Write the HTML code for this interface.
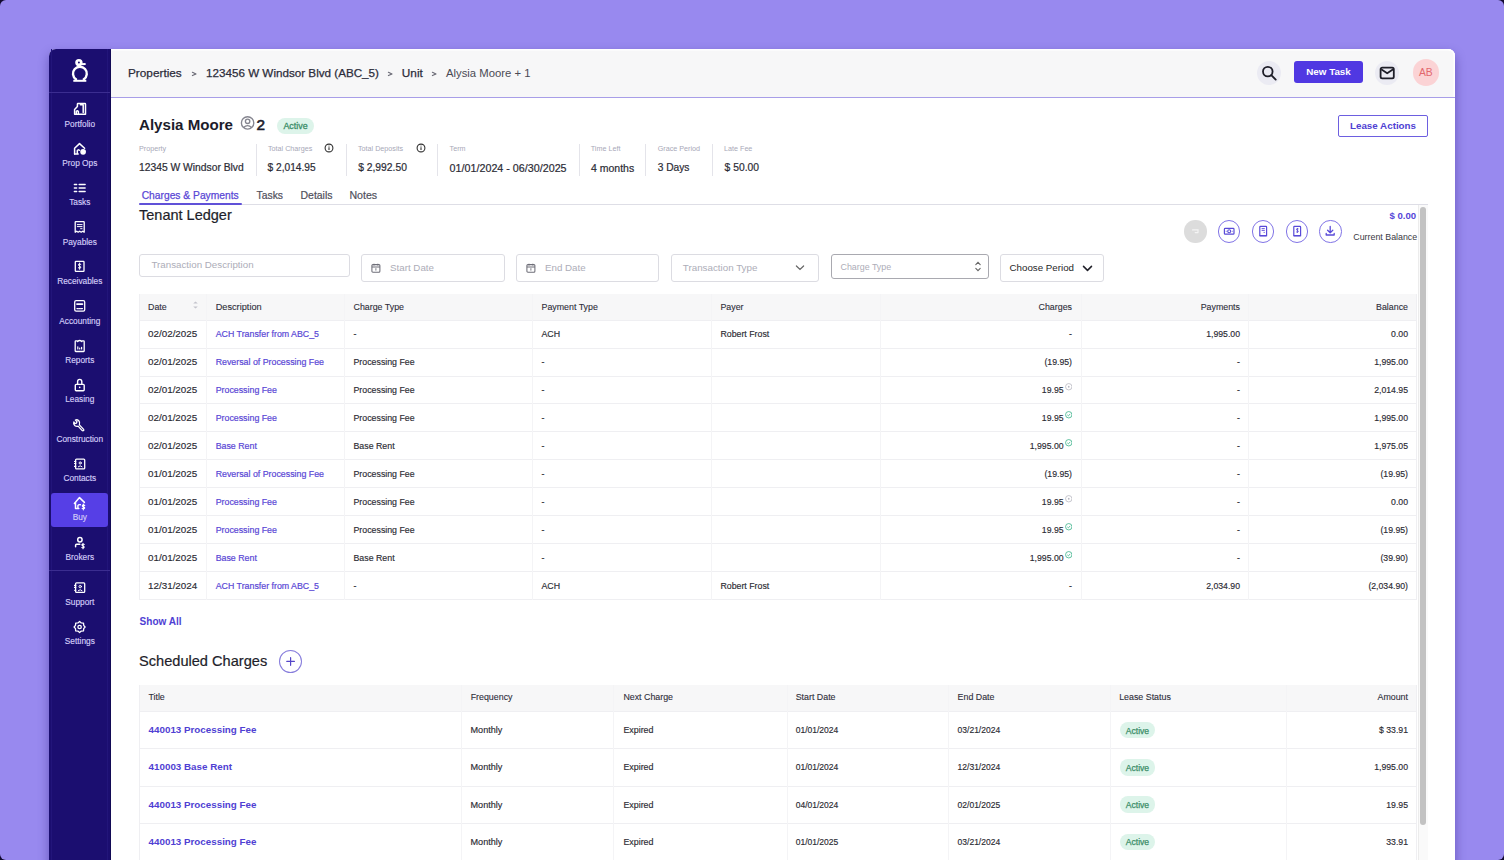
<!DOCTYPE html><html><head><meta charset="utf-8"><style>
*{box-sizing:border-box;margin:0;padding:0}
html,body{width:1504px;height:860px;overflow:hidden}
body{background:#120a30;font-family:"Liberation Sans",sans-serif;position:relative;color:#222}
.t{position:absolute;white-space:nowrap;line-height:20px}
.b{position:absolute}
.nav{position:absolute;left:49px;width:61px;text-align:center;color:#d2cbf6;font-size:8.3px;line-height:10px;white-space:nowrap}
.ico{position:absolute}
.lbl{position:absolute;white-space:nowrap;line-height:10px;font-size:7.2px;color:#a9a9b8}
.val{position:absolute;white-space:nowrap;line-height:16px;font-size:10.3px;color:#2a2a33}
.vd{position:absolute;width:1px;background:#e3e3e8;top:144px;height:32px}
.cell{position:absolute;white-space:nowrap;line-height:12px;font-size:8.8px;color:#2b2b30}
.hcell{position:absolute;white-space:nowrap;line-height:12px;font-size:8.4px;color:#2b2b38;font-weight:bold}
.lnk{color:#5b48d8}
.r{text-align:right}
.n{letter-spacing:0.5px}
</style></head><body>
<div class="b" style="left:0px;top:0px;width:1504px;height:860px;background:#9889ef;border-radius:6px"></div>
<div class="b" style="left:49px;top:49px;width:1406px;height:831px;background:#fff;border-radius:7px 7px 0 0;box-shadow:0 5px 11px rgba(30,15,110,0.4)"></div>
<div class="b" style="left:49px;top:49px;width:61.599999999999994px;height:831px;background:#1b0e70;border-radius:7px 0 0 0"></div>
<div class="b" style="left:51px;top:49px;width:1px;height:831px;background:#22157a"></div>
<div class="b" style="left:107px;top:49px;width:1px;height:831px;background:#22157a"></div>
<div class="b" style="left:109.6px;top:49px;width:1.0px;height:831px;background:#120a55"></div>
<div class="b" style="left:49px;top:92px;width:61px;height:1px;background:#3b2d90"></div>
<div class="b" style="left:49px;top:570px;width:61px;height:1px;background:#3b2d90"></div>
<div class="b" style="left:110.6px;top:49px;width:1344.4px;height:49px;background:#f7f7f8;border-bottom:1px solid #a89ee8;border-radius:0 7px 0 0;box-shadow:inset 0 1.5px 0 #fff, inset -1.5px 0 0 #fff"></div>
<div class="b" style="left:51px;top:493px;width:57px;height:33.5px;background:#563fe6;border-radius:3px"></div>
<div class="t" style="left:49px;top:118.5px;line-height:10px;font-size:8.3px;color:#d4cdf8;width:61.6px;text-align:center;-webkit-text-stroke:0.15px #d4cdf8;">Portfolio</div>
<div class="t" style="left:49px;top:158.0px;line-height:10px;font-size:8.3px;color:#d4cdf8;width:61.6px;text-align:center;-webkit-text-stroke:0.15px #d4cdf8;">Prop Ops</div>
<div class="t" style="left:49px;top:197.0px;line-height:10px;font-size:8.3px;color:#d4cdf8;width:61.6px;text-align:center;-webkit-text-stroke:0.15px #d4cdf8;">Tasks</div>
<div class="t" style="left:49px;top:236.6px;line-height:10px;font-size:8.3px;color:#d4cdf8;width:61.6px;text-align:center;-webkit-text-stroke:0.15px #d4cdf8;">Payables</div>
<div class="t" style="left:49px;top:276.0px;line-height:10px;font-size:8.3px;color:#d4cdf8;width:61.6px;text-align:center;-webkit-text-stroke:0.15px #d4cdf8;">Receivables</div>
<div class="t" style="left:49px;top:315.5px;line-height:10px;font-size:8.3px;color:#d4cdf8;width:61.6px;text-align:center;-webkit-text-stroke:0.15px #d4cdf8;">Accounting</div>
<div class="t" style="left:49px;top:354.9px;line-height:10px;font-size:8.3px;color:#d4cdf8;width:61.6px;text-align:center;-webkit-text-stroke:0.15px #d4cdf8;">Reports</div>
<div class="t" style="left:49px;top:394.3px;line-height:10px;font-size:8.3px;color:#d4cdf8;width:61.6px;text-align:center;-webkit-text-stroke:0.15px #d4cdf8;">Leasing</div>
<div class="t" style="left:49px;top:433.7px;line-height:10px;font-size:8.3px;color:#d4cdf8;width:61.6px;text-align:center;-webkit-text-stroke:0.15px #d4cdf8;">Construction</div>
<div class="t" style="left:49px;top:473.1px;line-height:10px;font-size:8.3px;color:#d4cdf8;width:61.6px;text-align:center;-webkit-text-stroke:0.15px #d4cdf8;">Contacts</div>
<div class="t" style="left:49px;top:512.3px;line-height:10px;font-size:8.3px;color:#d4cdf8;width:61.6px;text-align:center;-webkit-text-stroke:0.15px #d4cdf8;">Buy</div>
<div class="t" style="left:49px;top:551.9px;line-height:10px;font-size:8.3px;color:#d4cdf8;width:61.6px;text-align:center;-webkit-text-stroke:0.15px #d4cdf8;">Brokers</div>
<div class="t" style="left:49px;top:597.0px;line-height:10px;font-size:8.3px;color:#d4cdf8;width:61.6px;text-align:center;-webkit-text-stroke:0.15px #d4cdf8;">Support</div>
<div class="t" style="left:49px;top:636.2px;line-height:10px;font-size:8.3px;color:#d4cdf8;width:61.6px;text-align:center;-webkit-text-stroke:0.15px #d4cdf8;">Settings</div>
<svg class="ico" style="left:0;top:0" width="120" height="860" viewBox="0 0 120 860"><g stroke="#fff" fill="none" stroke-width="1.8" stroke-linecap="butt"><circle cx="78.9" cy="62.6" r="2.35" stroke-width="2.7"/><path d="M80.4 64.3 L85.6 63.9" stroke-width="2"/><path d="M75.9 80.6 V79.2 A6.9 6.9 0 1 1 83.9 79.2 V80.6" stroke-width="2.4"/><path d="M73.3 80.8 H86.3" stroke-width="2"/></g><g stroke="#fff" fill="none" stroke-linecap="round" stroke-linejoin="round" stroke-width="1.5"><path d="M74.6 114.3 V109.6 L77.4 106.6 V104.2 Q77.4 103.6 78 103.6 H84.9 Q85.5 103.6 85.5 104.2 V114.3 Z"/><path d="M76.3 114.3 V111.6 Q77.3 109.8 78.4 111.6 V114.3"/><path d="M80.4 104.8 H83.2 V112.6"/></g><g stroke="#fff" fill="none" stroke-linecap="round" stroke-linejoin="round" stroke-width="1.5"><path d="M74.6 153.9 V148.3 L79.5 143.6 L84.6 148.2"/><path d="M74.6 153.9 H78.2"/><path d="M77.3 153.4 V150.6 Q78.2 149.3 79.3 150.3"/><circle cx="83.1" cy="151.8" r="2.1" fill="#fff"/></g><g stroke="#fff" fill="none" stroke-linecap="round" stroke-linejoin="round" stroke-width="1.5"><path d="M74.4 184.5 H76.6 M79.2 184.5 H85.1 M74.4 188.1 H76.6 M79.2 188.1 H85.1 M74.4 191.6 H76.6 M79.2 191.6 H85.1"/></g><g stroke="#fff" fill="none" stroke-linecap="round" stroke-linejoin="round" stroke-width="1.5"><path d="M75.2 232.2 V222.2 Q75.2 221.6 75.8 221.6 H83.6 Q84.2 221.6 84.2 222.2 V232.2 L82.7 231.2 L81.2 232.2 L79.7 231.2 L78.2 232.2 L76.7 231.2 Z" stroke-width="1.3"/><path d="M77.3 224.6 H82.1 M77.3 226.6 H82.1 M80.6 228.7 H82.1" stroke-width="1"/></g><g stroke="#fff" fill="none" stroke-linecap="round" stroke-linejoin="round" stroke-width="1.5"><rect x="75.3" y="261.4" width="8.7" height="10" rx="0.6" stroke-width="1.3"/><path d="M80.9 264.4 Q79.6 263.4 78.5 264.3 Q77.9 265.4 79.6 266.1 Q81.3 266.7 80.7 267.9 Q79.6 268.8 78.3 267.8 M79.6 263 V269.3" stroke-width="1"/></g><g stroke="#fff" fill="none" stroke-linecap="round" stroke-linejoin="round" stroke-width="1.5"><rect x="74.7" y="300.7" width="10" height="10.5" rx="1.4" stroke-width="1.3"/><path d="M77 304.1 H82.4" stroke-width="1.8"/><path d="M77 308.6 H82.4" stroke-width="1.4" stroke-dasharray="1.2 0.9"/></g><g stroke="#fff" fill="none" stroke-linecap="round" stroke-linejoin="round" stroke-width="1.5"><path d="M77.3 340.8 H75.8 Q75.2 340.8 75.2 341.4 V351 Q75.2 351.5 75.8 351.5 H83.6 Q84.2 351.5 84.2 351 V341.4 Q84.2 340.8 83.6 340.8 H82.1" stroke-width="1.3"/><path d="M77.6 341.6 Q79.7 339.6 81.8 341.6" stroke-width="1.4"/><path d="M77.8 349 V346.8 M79.7 349 V348 M81.6 349 V347.4" stroke-width="1.2"/></g><g stroke="#fff" fill="none" stroke-linecap="round" stroke-linejoin="round" stroke-width="1.5"><path d="M77.6 384.2 V381.6 Q77.6 379.4 79.7 379.4 Q81.8 379.4 81.8 381.6 V384.2" stroke-width="1.4"/><rect x="75.3" y="384.4" width="8.9" height="6.3" rx="0.9" stroke-width="1.4"/><circle cx="79.7" cy="387.4" r="0.8" fill="#fff" stroke="none"/></g><g stroke="#fff" fill="none" stroke-linecap="round" stroke-linejoin="round" stroke-width="1.5"><path d="M83.6 429.4 L79.4 424.9 Q80.3 422.2 78.6 420.5 Q77 419.3 75.4 420.1 L77 421.8 L76.4 423.2 L75 423.6 L73.8 422 Q73.2 424 74.6 425.4 Q76.4 426.8 78.1 426.1 L82.2 430.6 Q82.9 431.2 83.6 430.6 Q84.2 430 83.6 429.4 Z" stroke-width="1.3"/></g><g stroke="#fff" fill="none" stroke-linecap="round" stroke-linejoin="round" stroke-width="1.5"><rect x="75.6" y="459.2" width="9.1" height="9.7" rx="0.9" stroke-width="1.3"/><path d="M74.5 461.5 H75.8 M74.5 463.5 H75.8 M74.5 466.4 H75.8" stroke-width="1.1"/><circle cx="80.2" cy="463" r="1.1" stroke-width="1"/><path d="M78.3 466.7 Q80.2 464.7 82.1 466.7" stroke-width="1"/></g><g stroke="#fff" fill="none" stroke-linecap="round" stroke-linejoin="round" stroke-width="1.5"><path d="M74.4 503.4 L79.5 497.6 L84.4 502.4" stroke-width="1.5"/><path d="M75.5 502.8 V508.6 H78.8" stroke-width="1.5"/><path d="M77.9 508.4 V505.6 Q78.4 504.5 80.4 504.7" stroke-width="1.4"/><path d="M84.7 505.4 Q83.5 504.6 82.5 505.3 Q82 506.4 83.4 506.8 Q84.9 507.2 84.5 508.4 Q83.5 509.3 82.2 508.5 M83.4 504 V509.8" stroke-width="1.2"/></g><g stroke="#fff" fill="none" stroke-linecap="round" stroke-linejoin="round" stroke-width="1.5"><circle cx="79.9" cy="539.7" r="2.2" stroke-width="1.5"/><path d="M75.6 546.8 V545.2 Q75.6 544.2 76.6 544.2 H79.8" stroke-width="1.5"/><path d="M84.2 544.4 Q83 543.6 82 544.4 Q81.6 545.5 82.9 545.9 Q84.4 546.3 84 547.5 Q82.9 548.3 81.8 547.6 M83 543.4 V548.8" stroke-width="1.1"/></g><g stroke="#fff" fill="none" stroke-linecap="round" stroke-linejoin="round" stroke-width="1.5"><rect x="75.6" y="582.9" width="9.1" height="9.5" rx="0.9" stroke-width="1.3"/><path d="M74.5 585.4 H75.8 M74.5 587.4 H75.8 M74.5 590.2 H75.8" stroke-width="1.1"/><circle cx="80.2" cy="586.6" r="1.2" stroke-width="1"/><path d="M78.3 590.6 Q80.2 588.6 82.1 590.6" stroke-width="1"/></g><g stroke="#fff" fill="none" stroke-linecap="round" stroke-linejoin="round" stroke-width="1.5"><path d="M79.6 621.5 L81.3 622.9 L83.5 623.1 L83.7 625.3 L85.1 627 L83.7 628.7 L83.5 630.9 L81.3 631.1 L79.6 632.5 L77.9 631.1 L75.7 630.9 L75.5 628.7 L74.1 627 L75.5 625.3 L75.7 623.1 L77.9 622.9 Z" stroke-width="1.3"/><circle cx="79.6" cy="627" r="1.7" stroke-width="1.3"/></g></svg>
<div class="t" style="left:128px;top:62.7px;line-height:20px;font-size:11.8px;color:#2c2c3a;-webkit-text-stroke:0.25px #2c2c3a;">Properties</div>
<svg class="ico" style="left:190.9px;top:69.5px" width="7" height="8" viewBox="0 0 7 8"><path d="M1.4 2.2 L5 3.9 L1.4 5.6" stroke="#6b6b76" stroke-width="1.1" fill="none" stroke-linecap="round" stroke-linejoin="round"/></svg>
<div class="t" style="left:206px;top:62.7px;line-height:20px;font-size:11.66px;color:#2c2c3a;-webkit-text-stroke:0.25px #2c2c3a;">123456 W Windsor Blvd (ABC_5)</div>
<svg class="ico" style="left:386.5px;top:69.5px" width="7" height="8" viewBox="0 0 7 8"><path d="M1.4 2.2 L5 3.9 L1.4 5.6" stroke="#6b6b76" stroke-width="1.1" fill="none" stroke-linecap="round" stroke-linejoin="round"/></svg>
<div class="t" style="left:401.8px;top:62.7px;line-height:20px;font-size:11.8px;color:#2c2c3a;-webkit-text-stroke:0.25px #2c2c3a;">Unit</div>
<svg class="ico" style="left:431.1px;top:69.5px" width="7" height="8" viewBox="0 0 7 8"><path d="M1.4 2.2 L5 3.9 L1.4 5.6" stroke="#6b6b76" stroke-width="1.1" fill="none" stroke-linecap="round" stroke-linejoin="round"/></svg>
<div class="t" style="left:446px;top:62.7px;line-height:20px;font-size:11.3px;color:#4a4a55;">Alysia Moore + 1</div>
<div class="b" style="left:1257px;top:60.5px;width:24px;height:24.0px;background:#ebebf3;border-radius:50%"></div>
<svg class="ico" style="left:1257px;top:60.5px" width="24" height="24" viewBox="0 0 24 24"><circle cx="10.8" cy="10.6" r="4.8" stroke="#1e1e28" stroke-width="1.8" fill="none"/><path d="M14.3 14.2 L18.7 18.6" stroke="#1e1e28" stroke-width="1.9" stroke-linecap="round"/></svg>
<div class="b" style="left:1294px;top:61.4px;width:69px;height:21.6px;background:#5038e2;border-radius:3px"></div>
<div class="t" style="left:1294px;top:62.2px;line-height:20px;font-size:9.83px;color:#fff;font-weight:bold;width:69px;text-align:center;">New Task</div>
<div class="b" style="left:1375.3px;top:60.5px;width:24.0px;height:24.0px;background:#ebebf3;border-radius:50%"></div>
<svg class="ico" style="left:1375.3px;top:60.5px" width="24" height="24" viewBox="0 0 24 24"><rect x="5.6" y="6.7" width="13.2" height="10.6" rx="1.6" stroke="#1e1e28" stroke-width="1.8" fill="none"/><path d="M6.2 8.3 L12.2 12.3 L18.2 8.3" stroke="#1e1e28" stroke-width="1.7" fill="none" stroke-linejoin="round"/></svg>
<div class="b" style="left:1412.6px;top:59.3px;width:26.40000000000009px;height:26.400000000000006px;background:#fbd3d5;border-radius:50%"></div>
<div class="t" style="left:1412.6px;top:62.5px;line-height:20px;font-size:10.3px;color:#e2676d;width:26.4px;text-align:center;">AB</div>
<div class="t" style="left:139px;top:115.0px;line-height:20px;font-size:15.1px;color:#1c1c2b;font-weight:bold;">Alysia Moore</div>
<svg class="ico" style="left:240px;top:115px" width="16" height="16" viewBox="0 0 16 16"><circle cx="7.6" cy="7.9" r="6.2" stroke="#85858f" stroke-width="1.35" fill="none"/><circle cx="7.6" cy="6.3" r="2.2" stroke="#85858f" stroke-width="1.35" fill="none"/><path d="M3.6 12.6 Q7.6 8.6 11.6 12.6" stroke="#85858f" stroke-width="1.35" fill="none"/></svg>
<div class="t" style="left:256.5px;top:115.0px;line-height:20px;font-size:15.3px;color:#1c1c2b;-webkit-text-stroke:0.6px #1c1c2b;">2</div>
<div class="b" style="left:277px;top:118px;width:37px;height:16px;background:#ddf4ea;border-radius:8px"></div>
<div class="t" style="left:277px;top:116.0px;line-height:20px;font-size:8.9px;color:#3a8d68;width:37px;text-align:center;-webkit-text-stroke:0.3px #3a8d68;">Active</div>
<div class="b" style="left:1338px;top:115.2px;width:90px;height:22.10000000000001px;border:1px solid #6d5fe0;border-radius:2px;background:#fff"></div>
<div class="t" style="left:1338px;top:116.2px;line-height:20px;font-size:9.8px;color:#4f3fd3;font-weight:bold;width:90px;text-align:center;">Lease Actions</div>
<div class="t" style="left:139px;top:144.0px;line-height:10px;font-size:7.2px;color:#a8a8b8;">Property</div>
<div class="t" style="left:139px;top:160.1px;line-height:16px;font-size:10.3px;color:#2b2b35;-webkit-text-stroke:0.2px #2b2b35;">12345 W Windsor Blvd</div>
<div class="b" style="left:255.5px;top:144px;width:1.0px;height:32px;background:#e4e4ea"></div>
<div class="t" style="left:268px;top:144.0px;line-height:10px;font-size:7.2px;color:#a8a8b8;">Total Charges</div>
<div class="t" style="left:267.6px;top:160.1px;line-height:16px;font-size:10.16px;color:#2b2b35;-webkit-text-stroke:0.2px #2b2b35;">$ 2,014.95</div>
<svg class="ico" style="left:324.3px;top:143.3px" width="10" height="10" viewBox="0 0 10 10"><circle cx="5" cy="5" r="3.9" stroke="#333" stroke-width="1.1" fill="none"/><path d="M5 4.3 V7" stroke="#333" stroke-width="1.1"/><circle cx="5" cy="3" r="0.6" fill="#333"/></svg>
<div class="b" style="left:345.5px;top:144px;width:1.0px;height:32px;background:#e4e4ea"></div>
<div class="t" style="left:358px;top:144.0px;line-height:10px;font-size:7.2px;color:#a8a8b8;">Total Deposits</div>
<div class="t" style="left:358.2px;top:160.1px;line-height:16px;font-size:10.3px;color:#2b2b35;-webkit-text-stroke:0.2px #2b2b35;">$ 2,992.50</div>
<svg class="ico" style="left:416px;top:143.3px" width="10" height="10" viewBox="0 0 10 10"><circle cx="5" cy="5" r="3.9" stroke="#333" stroke-width="1.1" fill="none"/><path d="M5 4.3 V7" stroke="#333" stroke-width="1.1"/><circle cx="5" cy="3" r="0.6" fill="#333"/></svg>
<div class="b" style="left:437px;top:144px;width:1px;height:32px;background:#e4e4ea"></div>
<div class="t" style="left:449.6px;top:144.0px;line-height:10px;font-size:7.2px;color:#a8a8b8;">Term</div>
<div class="t" style="left:449.6px;top:160.1px;line-height:16px;font-size:10.74px;color:#2b2b35;-webkit-text-stroke:0.2px #2b2b35;">01/01/2024 - 06/30/2025</div>
<div class="b" style="left:578.5px;top:144px;width:1.0px;height:32px;background:#e4e4ea"></div>
<div class="t" style="left:590.7px;top:144.0px;line-height:10px;font-size:7.2px;color:#a8a8b8;">Time Left</div>
<div class="t" style="left:591px;top:160.1px;line-height:16px;font-size:10.5px;color:#2b2b35;-webkit-text-stroke:0.2px #2b2b35;">4 months</div>
<div class="b" style="left:645.3px;top:144px;width:1.0px;height:32px;background:#e4e4ea"></div>
<div class="t" style="left:657.7px;top:144.0px;line-height:10px;font-size:7.2px;color:#a8a8b8;">Grace Period</div>
<div class="t" style="left:657.7px;top:160.1px;line-height:16px;font-size:10.2px;color:#2b2b35;-webkit-text-stroke:0.2px #2b2b35;">3 Days</div>
<div class="b" style="left:712.3px;top:144px;width:1.0px;height:32px;background:#e4e4ea"></div>
<div class="t" style="left:724px;top:144.0px;line-height:10px;font-size:7.2px;color:#a8a8b8;">Late Fee</div>
<div class="t" style="left:724.6px;top:160.1px;line-height:16px;font-size:10.3px;color:#2b2b35;-webkit-text-stroke:0.2px #2b2b35;">$ 50.00</div>
<div class="b" style="left:139px;top:203.6px;width:1289px;height:1.0px;background:#dedee6"></div>
<div class="t" style="left:141.7px;top:185.5px;line-height:20px;font-size:10.27px;color:#5a48d6;-webkit-text-stroke:0.25px #5a48d6;">Charges &amp; Payments</div>
<div class="b" style="left:138.6px;top:202.6px;width:103.6px;height:2.0px;background:#6051d8;border-radius:1px"></div>
<div class="t" style="left:256.6px;top:185.5px;line-height:20px;font-size:10.33px;color:#50505c;-webkit-text-stroke:0.2px #50505c;">Tasks</div>
<div class="t" style="left:300.5px;top:185.5px;line-height:20px;font-size:10.47px;color:#50505c;-webkit-text-stroke:0.2px #50505c;">Details</div>
<div class="t" style="left:349.4px;top:185.0px;line-height:20px;font-size:10.6px;color:#50505c;-webkit-text-stroke:0.2px #50505c;">Notes</div>
<div class="b" style="left:1417.5px;top:204.6px;width:10.0px;height:675.4px;background:#fafafa;border-left:1px solid #ececec"></div>
<div class="b" style="left:1420.4px;top:207px;width:5.199999999999818px;height:617.5px;background:#c2c2c2;border-radius:3px"></div>
<div class="t" style="left:139px;top:204.8px;line-height:20px;font-size:14.5px;color:#1e1e2a;-webkit-text-stroke:0.2px #1e1e2a;">Tenant Ledger</div>
<div class="t" style="right:87.79999999999995px;top:205.8px;line-height:20px;font-size:9.6px;color:#5545d8;font-weight:bold;">$ 0.00</div>
<div class="t" style="right:86.79999999999995px;top:226.6px;line-height:20px;font-size:8.86px;color:#3a3a44;">Current Balance</div>
<div class="b" style="left:1184.3999999999999px;top:220.3px;width:22.40000000000009px;height:22.399999999999977px;background:#dcdcdc;border:none;border-radius:50%"></div><svg class="ico" style="left:1184.3999999999999px;top:220.3px" width="22.4" height="22.4" viewBox="0 0 22.4 22.4"><path d="M8.6 9.9 H14 V12.6 M14 12.6 H11.2" stroke="#f4f4f4" stroke-width="1.2" fill="none" stroke-linecap="round"/></svg>
<div class="b" style="left:1218.1px;top:220.3px;width:22.40000000000009px;height:22.399999999999977px;background:#fff;border:1px solid #8174e6;border-radius:50%"></div><svg class="ico" style="left:1218.1px;top:220.3px" width="22.4" height="22.4" viewBox="0 0 22.4 22.4"><rect x="6.4" y="8.4" width="9.6" height="5.8" rx="0.8" stroke="#5a4bd8" stroke-width="1.2" fill="none"/><circle cx="11.2" cy="11.3" r="1.5" stroke="#5a4bd8" stroke-width="1.1" fill="none"/><path d="M7.8 11.3 H8.6 M13.8 11.3 H14.6" stroke="#5a4bd8" stroke-width="1"/></svg>
<div class="b" style="left:1252.1px;top:220.3px;width:22.40000000000009px;height:22.399999999999977px;background:#fff;border:1px solid #8174e6;border-radius:50%"></div><svg class="ico" style="left:1252.1px;top:220.3px" width="22.4" height="22.4" viewBox="0 0 22.4 22.4"><path d="M7.8 15.6 V7 Q7.8 6.4 8.4 6.4 H14 Q14.6 6.4 14.6 7 V15.6 Z" stroke="#5a4bd8" stroke-width="1.2" fill="none"/><path d="M9.6 8.6 H12.8 M9.6 10.4 H12.8 M11.6 12.4 H12.8" stroke="#5a4bd8" stroke-width="0.9"/><path d="M7.8 15.8 H14.6" stroke="#5a4bd8" stroke-width="1.3"/></svg>
<div class="b" style="left:1285.8px;top:220.3px;width:22.40000000000009px;height:22.399999999999977px;background:#fff;border:1px solid #8174e6;border-radius:50%"></div><svg class="ico" style="left:1285.8px;top:220.3px" width="22.4" height="22.4" viewBox="0 0 22.4 22.4"><path d="M7.8 15.6 V7 Q7.8 6.4 8.4 6.4 H14 Q14.6 6.4 14.6 7 V15.6 Z" stroke="#5a4bd8" stroke-width="1.2" fill="none"/><path d="M12.5 8.9 Q11.6 8.3 10.7 8.9 Q10.2 9.9 11.3 10.3 Q12.6 10.8 12.2 11.8 Q11.3 12.6 10.3 11.9 M11.4 8 V12.8" stroke="#5a4bd8" stroke-width="0.9" fill="none"/><path d="M7.8 15.8 H14.6" stroke="#5a4bd8" stroke-width="1.3"/></svg>
<div class="b" style="left:1319.3999999999999px;top:220.3px;width:22.40000000000009px;height:22.399999999999977px;background:#fff;border:1px solid #8174e6;border-radius:50%"></div><svg class="ico" style="left:1319.3999999999999px;top:220.3px" width="22.4" height="22.4" viewBox="0 0 22.4 22.4"><path d="M11.2 6.5 V12.6 M8.6 10.2 L11.2 12.7 L13.8 10.2" stroke="#5a4bd8" stroke-width="1.3" fill="none" stroke-linecap="round" stroke-linejoin="round"/><path d="M7.2 13.4 V15 H15.2 V13.4" stroke="#5a4bd8" stroke-width="1.3" fill="none" stroke-linecap="round" stroke-linejoin="round"/></svg>
<div class="b" style="left:139px;top:254px;width:211px;height:22.69999999999999px;border:1px solid #dcdce2;border-radius:3px;background:#fff"></div>
<div class="t" style="left:151.5px;top:255.2px;line-height:20px;font-size:9.75px;color:#adadb8;">Transaction Description</div>
<div class="b" style="left:361.3px;top:254px;width:143.39999999999998px;height:27.80000000000001px;border:1px solid #dcdce2;border-radius:3px;background:#fff"></div>
<svg class="ico" style="left:370.8px;top:262.6px" width="10" height="10" viewBox="0 0 10 10"><rect x="0.9" y="1.6" width="8" height="7.6" rx="1" stroke="#6e6e78" stroke-width="1.05" fill="none"/><path d="M0.9 3.9 H8.9 M3 0.8 V2.4 M6.8 0.8 V2.4" stroke="#6e6e78" stroke-width="1.05"/><path d="M4.9 5.2 V7.6" stroke="#6e6e78" stroke-width="0.9"/></svg>
<div class="t" style="left:390px;top:257.8px;line-height:20px;font-size:9.77px;color:#adadb8;">Start Date</div>
<div class="b" style="left:516px;top:254px;width:143px;height:27.80000000000001px;border:1px solid #dcdce2;border-radius:3px;background:#fff"></div>
<svg class="ico" style="left:525.8px;top:262.6px" width="10" height="10" viewBox="0 0 10 10"><rect x="0.9" y="1.6" width="8" height="7.6" rx="1" stroke="#6e6e78" stroke-width="1.05" fill="none"/><path d="M0.9 3.9 H8.9 M3 0.8 V2.4 M6.8 0.8 V2.4" stroke="#6e6e78" stroke-width="1.05"/><path d="M4.9 5.2 V7.6" stroke="#6e6e78" stroke-width="0.9"/></svg>
<div class="t" style="left:545px;top:257.8px;line-height:20px;font-size:9.76px;color:#adadb8;">End Date</div>
<div class="b" style="left:671.2px;top:254px;width:148.29999999999995px;height:27.80000000000001px;border:1px solid #dcdce2;border-radius:3px;background:#fff"></div>
<div class="t" style="left:682.8px;top:257.8px;line-height:20px;font-size:9.81px;color:#adadb8;">Transaction Type</div>
<svg class="ico" style="left:795px;top:264px" width="10" height="8" viewBox="0 0 10 8"><path d="M1.4 2 L5 5.5 L8.6 2" stroke="#666" stroke-width="1.2" fill="none" stroke-linecap="round"/></svg>
<div class="b" style="left:831.3px;top:254.4px;width:157.30000000000007px;height:24.900000000000006px;border:1px solid #a9a9b0;border-radius:3px;background:#fff"></div>
<div class="t" style="left:840.5px;top:256.6px;line-height:20px;font-size:8.88px;color:#adadb8;">Charge Type</div>
<svg class="ico" style="left:974px;top:260px" width="8" height="13" viewBox="0 0 8 13"><path d="M1.8 4.6 L4 2.4 L6.2 4.6 M1.8 8.4 L4 10.6 L6.2 8.4" stroke="#666" stroke-width="1.1" fill="none" stroke-linecap="round"/></svg>
<div class="b" style="left:1000px;top:254.4px;width:103.70000000000005px;height:27.49999999999997px;border:1px solid #dcdce2;border-radius:3px;background:#fff"></div>
<div class="t" style="left:1009.5px;top:257.8px;line-height:20px;font-size:9.75px;color:#1f1f28;">Choose Period</div>
<svg class="ico" style="left:1082px;top:263.5px" width="11" height="9" viewBox="0 0 11 9"><path d="M1.5 2.4 L5.5 6.4 L9.5 2.4" stroke="#1f1f28" stroke-width="1.5" fill="none" stroke-linecap="round" stroke-linejoin="round"/></svg>
<div class="b" style="left:139px;top:294px;width:1277.8px;height:26.19999999999999px;background:#f7f7f8"></div>
<div class="b" style="left:139px;top:319.7px;width:1277.8px;height:1.0px;background:#efeff2"></div>
<div class="b" style="left:139px;top:347.63px;width:1277.8px;height:1.0px;background:#efeff2"></div>
<div class="b" style="left:139px;top:375.56px;width:1277.8px;height:1.0px;background:#efeff2"></div>
<div class="b" style="left:139px;top:403.49px;width:1277.8px;height:1.0px;background:#efeff2"></div>
<div class="b" style="left:139px;top:431.41999999999996px;width:1277.8px;height:1.0px;background:#efeff2"></div>
<div class="b" style="left:139px;top:459.35px;width:1277.8px;height:1.0px;background:#efeff2"></div>
<div class="b" style="left:139px;top:487.28px;width:1277.8px;height:1.0px;background:#efeff2"></div>
<div class="b" style="left:139px;top:515.21px;width:1277.8px;height:1.0px;background:#efeff2"></div>
<div class="b" style="left:139px;top:543.14px;width:1277.8px;height:1.0px;background:#efeff2"></div>
<div class="b" style="left:139px;top:571.0699999999999px;width:1277.8px;height:1.0px;background:#efeff2"></div>
<div class="b" style="left:139px;top:599.0px;width:1277.8px;height:1.0px;background:#efeff2"></div>
<div class="b" style="left:139px;top:294px;width:1px;height:305.5px;background:#efeff2"></div>
<div class="b" style="left:1415.8px;top:294px;width:1.0px;height:305.5px;background:#efeff2"></div>
<div class="b" style="left:205.5px;top:294px;width:1.0px;height:305.5px;background:#f4f4f6"></div>
<div class="b" style="left:344.1px;top:294px;width:1.0px;height:305.5px;background:#f4f4f6"></div>
<div class="b" style="left:531.9px;top:294px;width:1.0px;height:305.5px;background:#f4f4f6"></div>
<div class="b" style="left:710.9px;top:294px;width:1.0px;height:305.5px;background:#f4f4f6"></div>
<div class="b" style="left:879.8px;top:294px;width:1.0px;height:305.5px;background:#f4f4f6"></div>
<div class="b" style="left:1081.1px;top:294px;width:1.0px;height:305.5px;background:#f4f4f6"></div>
<div class="b" style="left:1247.9px;top:294px;width:1.0px;height:305.5px;background:#f4f4f6"></div>
<div class="t" style="left:148px;top:300.9px;line-height:12px;font-size:8.85px;color:#2e2e3a;-webkit-text-stroke:0.1px #2e2e3a;">Date</div>
<svg class="ico" style="left:192px;top:300px" width="7" height="10" viewBox="0 0 7 10"><path d="M1.2 3.6 L3.5 1.4 L5.8 3.6 Z M1.2 6.4 L3.5 8.6 L5.8 6.4 Z" fill="#c4c4cc"/></svg>
<div class="t" style="left:215.7px;top:300.9px;line-height:12px;font-size:9.2px;color:#2e2e3a;-webkit-text-stroke:0.1px #2e2e3a;">Description</div>
<div class="t" style="left:353.5px;top:300.9px;line-height:12px;font-size:8.85px;color:#2e2e3a;-webkit-text-stroke:0.1px #2e2e3a;">Charge Type</div>
<div class="t" style="left:541.5px;top:300.9px;line-height:12px;font-size:8.85px;color:#2e2e3a;-webkit-text-stroke:0.1px #2e2e3a;">Payment Type</div>
<div class="t" style="left:720.4px;top:300.9px;line-height:12px;font-size:8.85px;color:#2e2e3a;-webkit-text-stroke:0.1px #2e2e3a;">Payer</div>
<div class="t" style="right:432px;top:300.9px;line-height:12px;font-size:8.85px;color:#2e2e3a;-webkit-text-stroke:0.1px #2e2e3a;">Charges</div>
<div class="t" style="right:264px;top:300.9px;line-height:12px;font-size:8.85px;color:#2e2e3a;-webkit-text-stroke:0.1px #2e2e3a;">Payments</div>
<div class="t" style="right:96px;top:300.9px;line-height:12px;font-size:8.85px;color:#2e2e3a;-webkit-text-stroke:0.1px #2e2e3a;">Balance</div>
<div class="t" style="left:148px;top:328.16499999999996px;line-height:12px;font-size:9.85px;color:#2b2b33;-webkit-text-stroke:0.15px #2b2b33;">02/02/2025</div>
<div class="t" style="left:215.7px;top:328.16499999999996px;line-height:12px;font-size:8.82px;color:#5a48d6;-webkit-text-stroke:0.2px #5a48d6;">ACH Transfer from ABC_5</div>
<div class="t" style="left:353.5px;top:328.16499999999996px;line-height:12px;font-size:8.8px;color:#2b2b33;-webkit-text-stroke:0.15px #2b2b33;">-</div>
<div class="t" style="left:541.5px;top:328.16499999999996px;line-height:12px;font-size:8.8px;color:#2b2b33;-webkit-text-stroke:0.15px #2b2b33;">ACH</div>
<div class="t" style="left:720.4px;top:328.16499999999996px;line-height:12px;font-size:8.8px;color:#2b2b33;-webkit-text-stroke:0.15px #2b2b33;">Robert Frost</div>
<div class="t" style="right:432px;top:328.16499999999996px;line-height:12px;font-size:8.7px;color:#2b2b33;-webkit-text-stroke:0.15px #2b2b33;">-</div>
<div class="t" style="right:264px;top:328.16499999999996px;line-height:12px;font-size:8.7px;color:#2b2b33;-webkit-text-stroke:0.15px #2b2b33;">1,995.00</div>
<div class="t" style="right:96px;top:328.16499999999996px;line-height:12px;font-size:8.7px;color:#2b2b33;-webkit-text-stroke:0.15px #2b2b33;">0.00</div>
<div class="t" style="left:148px;top:356.09499999999997px;line-height:12px;font-size:9.85px;color:#2b2b33;-webkit-text-stroke:0.15px #2b2b33;">02/01/2025</div>
<div class="t" style="left:215.7px;top:356.09499999999997px;line-height:12px;font-size:8.82px;color:#5a48d6;-webkit-text-stroke:0.2px #5a48d6;">Reversal of Processing Fee</div>
<div class="t" style="left:353.5px;top:356.09499999999997px;line-height:12px;font-size:8.8px;color:#2b2b33;-webkit-text-stroke:0.15px #2b2b33;">Processing Fee</div>
<div class="t" style="left:541.5px;top:356.09499999999997px;line-height:12px;font-size:8.8px;color:#2b2b33;-webkit-text-stroke:0.15px #2b2b33;">-</div>
<div class="t" style="right:432px;top:356.09499999999997px;line-height:12px;font-size:8.7px;color:#2b2b33;-webkit-text-stroke:0.15px #2b2b33;">(19.95)</div>
<div class="t" style="right:264px;top:356.09499999999997px;line-height:12px;font-size:8.7px;color:#2b2b33;-webkit-text-stroke:0.15px #2b2b33;">-</div>
<div class="t" style="right:96px;top:356.09499999999997px;line-height:12px;font-size:8.7px;color:#2b2b33;-webkit-text-stroke:0.15px #2b2b33;">1,995.00</div>
<div class="t" style="left:148px;top:384.025px;line-height:12px;font-size:9.85px;color:#2b2b33;-webkit-text-stroke:0.15px #2b2b33;">02/01/2025</div>
<div class="t" style="left:215.7px;top:384.025px;line-height:12px;font-size:8.82px;color:#5a48d6;-webkit-text-stroke:0.2px #5a48d6;">Processing Fee</div>
<div class="t" style="left:353.5px;top:384.025px;line-height:12px;font-size:8.8px;color:#2b2b33;-webkit-text-stroke:0.15px #2b2b33;">Processing Fee</div>
<div class="t" style="left:541.5px;top:384.025px;line-height:12px;font-size:8.8px;color:#2b2b33;-webkit-text-stroke:0.15px #2b2b33;">-</div>
<div class="t" style="right:440.4000000000001px;top:384.025px;line-height:12px;font-size:8.7px;color:#2b2b33;-webkit-text-stroke:0.15px #2b2b33;">19.95</div>
<svg class="ico" style="left:1064.5px;top:383.42499999999995px" width="7.5" height="7.5" viewBox="0 0 7.5 7.5"><circle cx="3.75" cy="3.75" r="3.2" stroke="#b9b9c2" stroke-width="0.8" fill="none"/><circle cx="3.75" cy="3.75" r="0.9" fill="#b9b9c2"/></svg>
<div class="t" style="right:264px;top:384.025px;line-height:12px;font-size:8.7px;color:#2b2b33;-webkit-text-stroke:0.15px #2b2b33;">-</div>
<div class="t" style="right:96px;top:384.025px;line-height:12px;font-size:8.7px;color:#2b2b33;-webkit-text-stroke:0.15px #2b2b33;">2,014.95</div>
<div class="t" style="left:148px;top:411.955px;line-height:12px;font-size:9.85px;color:#2b2b33;-webkit-text-stroke:0.15px #2b2b33;">02/01/2025</div>
<div class="t" style="left:215.7px;top:411.955px;line-height:12px;font-size:8.82px;color:#5a48d6;-webkit-text-stroke:0.2px #5a48d6;">Processing Fee</div>
<div class="t" style="left:353.5px;top:411.955px;line-height:12px;font-size:8.8px;color:#2b2b33;-webkit-text-stroke:0.15px #2b2b33;">Processing Fee</div>
<div class="t" style="left:541.5px;top:411.955px;line-height:12px;font-size:8.8px;color:#2b2b33;-webkit-text-stroke:0.15px #2b2b33;">-</div>
<div class="t" style="right:440.4000000000001px;top:411.955px;line-height:12px;font-size:8.7px;color:#2b2b33;-webkit-text-stroke:0.15px #2b2b33;">19.95</div>
<svg class="ico" style="left:1064.5px;top:411.35499999999996px" width="7.5" height="7.5" viewBox="0 0 7.5 7.5"><circle cx="3.75" cy="3.75" r="3.2" stroke="#3bb28a" stroke-width="0.8" fill="none"/><path d="M2.3 3.9 L3.4 4.9 L5.2 2.9" stroke="#3bb28a" stroke-width="0.8" fill="none"/></svg>
<div class="t" style="right:264px;top:411.955px;line-height:12px;font-size:8.7px;color:#2b2b33;-webkit-text-stroke:0.15px #2b2b33;">-</div>
<div class="t" style="right:96px;top:411.955px;line-height:12px;font-size:8.7px;color:#2b2b33;-webkit-text-stroke:0.15px #2b2b33;">1,995.00</div>
<div class="t" style="left:148px;top:439.88499999999993px;line-height:12px;font-size:9.85px;color:#2b2b33;-webkit-text-stroke:0.15px #2b2b33;">02/01/2025</div>
<div class="t" style="left:215.7px;top:439.88499999999993px;line-height:12px;font-size:8.82px;color:#5a48d6;-webkit-text-stroke:0.2px #5a48d6;">Base Rent</div>
<div class="t" style="left:353.5px;top:439.88499999999993px;line-height:12px;font-size:8.8px;color:#2b2b33;-webkit-text-stroke:0.15px #2b2b33;">Base Rent</div>
<div class="t" style="left:541.5px;top:439.88499999999993px;line-height:12px;font-size:8.8px;color:#2b2b33;-webkit-text-stroke:0.15px #2b2b33;">-</div>
<div class="t" style="right:440.4000000000001px;top:439.88499999999993px;line-height:12px;font-size:8.7px;color:#2b2b33;-webkit-text-stroke:0.15px #2b2b33;">1,995.00</div>
<svg class="ico" style="left:1064.5px;top:439.2849999999999px" width="7.5" height="7.5" viewBox="0 0 7.5 7.5"><circle cx="3.75" cy="3.75" r="3.2" stroke="#3bb28a" stroke-width="0.8" fill="none"/><path d="M2.3 3.9 L3.4 4.9 L5.2 2.9" stroke="#3bb28a" stroke-width="0.8" fill="none"/></svg>
<div class="t" style="right:264px;top:439.88499999999993px;line-height:12px;font-size:8.7px;color:#2b2b33;-webkit-text-stroke:0.15px #2b2b33;">-</div>
<div class="t" style="right:96px;top:439.88499999999993px;line-height:12px;font-size:8.7px;color:#2b2b33;-webkit-text-stroke:0.15px #2b2b33;">1,975.05</div>
<div class="t" style="left:148px;top:467.815px;line-height:12px;font-size:9.85px;color:#2b2b33;-webkit-text-stroke:0.15px #2b2b33;">01/01/2025</div>
<div class="t" style="left:215.7px;top:467.815px;line-height:12px;font-size:8.82px;color:#5a48d6;-webkit-text-stroke:0.2px #5a48d6;">Reversal of Processing Fee</div>
<div class="t" style="left:353.5px;top:467.815px;line-height:12px;font-size:8.8px;color:#2b2b33;-webkit-text-stroke:0.15px #2b2b33;">Processing Fee</div>
<div class="t" style="left:541.5px;top:467.815px;line-height:12px;font-size:8.8px;color:#2b2b33;-webkit-text-stroke:0.15px #2b2b33;">-</div>
<div class="t" style="right:432px;top:467.815px;line-height:12px;font-size:8.7px;color:#2b2b33;-webkit-text-stroke:0.15px #2b2b33;">(19.95)</div>
<div class="t" style="right:264px;top:467.815px;line-height:12px;font-size:8.7px;color:#2b2b33;-webkit-text-stroke:0.15px #2b2b33;">-</div>
<div class="t" style="right:96px;top:467.815px;line-height:12px;font-size:8.7px;color:#2b2b33;-webkit-text-stroke:0.15px #2b2b33;">(19.95)</div>
<div class="t" style="left:148px;top:495.74499999999995px;line-height:12px;font-size:9.85px;color:#2b2b33;-webkit-text-stroke:0.15px #2b2b33;">01/01/2025</div>
<div class="t" style="left:215.7px;top:495.74499999999995px;line-height:12px;font-size:8.82px;color:#5a48d6;-webkit-text-stroke:0.2px #5a48d6;">Processing Fee</div>
<div class="t" style="left:353.5px;top:495.74499999999995px;line-height:12px;font-size:8.8px;color:#2b2b33;-webkit-text-stroke:0.15px #2b2b33;">Processing Fee</div>
<div class="t" style="left:541.5px;top:495.74499999999995px;line-height:12px;font-size:8.8px;color:#2b2b33;-webkit-text-stroke:0.15px #2b2b33;">-</div>
<div class="t" style="right:440.4000000000001px;top:495.74499999999995px;line-height:12px;font-size:8.7px;color:#2b2b33;-webkit-text-stroke:0.15px #2b2b33;">19.95</div>
<svg class="ico" style="left:1064.5px;top:495.1449999999999px" width="7.5" height="7.5" viewBox="0 0 7.5 7.5"><circle cx="3.75" cy="3.75" r="3.2" stroke="#b9b9c2" stroke-width="0.8" fill="none"/><circle cx="3.75" cy="3.75" r="0.9" fill="#b9b9c2"/></svg>
<div class="t" style="right:264px;top:495.74499999999995px;line-height:12px;font-size:8.7px;color:#2b2b33;-webkit-text-stroke:0.15px #2b2b33;">-</div>
<div class="t" style="right:96px;top:495.74499999999995px;line-height:12px;font-size:8.7px;color:#2b2b33;-webkit-text-stroke:0.15px #2b2b33;">0.00</div>
<div class="t" style="left:148px;top:523.6750000000001px;line-height:12px;font-size:9.85px;color:#2b2b33;-webkit-text-stroke:0.15px #2b2b33;">01/01/2025</div>
<div class="t" style="left:215.7px;top:523.6750000000001px;line-height:12px;font-size:8.82px;color:#5a48d6;-webkit-text-stroke:0.2px #5a48d6;">Processing Fee</div>
<div class="t" style="left:353.5px;top:523.6750000000001px;line-height:12px;font-size:8.8px;color:#2b2b33;-webkit-text-stroke:0.15px #2b2b33;">Processing Fee</div>
<div class="t" style="left:541.5px;top:523.6750000000001px;line-height:12px;font-size:8.8px;color:#2b2b33;-webkit-text-stroke:0.15px #2b2b33;">-</div>
<div class="t" style="right:440.4000000000001px;top:523.6750000000001px;line-height:12px;font-size:8.7px;color:#2b2b33;-webkit-text-stroke:0.15px #2b2b33;">19.95</div>
<svg class="ico" style="left:1064.5px;top:523.075px" width="7.5" height="7.5" viewBox="0 0 7.5 7.5"><circle cx="3.75" cy="3.75" r="3.2" stroke="#3bb28a" stroke-width="0.8" fill="none"/><path d="M2.3 3.9 L3.4 4.9 L5.2 2.9" stroke="#3bb28a" stroke-width="0.8" fill="none"/></svg>
<div class="t" style="right:264px;top:523.6750000000001px;line-height:12px;font-size:8.7px;color:#2b2b33;-webkit-text-stroke:0.15px #2b2b33;">-</div>
<div class="t" style="right:96px;top:523.6750000000001px;line-height:12px;font-size:8.7px;color:#2b2b33;-webkit-text-stroke:0.15px #2b2b33;">(19.95)</div>
<div class="t" style="left:148px;top:551.605px;line-height:12px;font-size:9.85px;color:#2b2b33;-webkit-text-stroke:0.15px #2b2b33;">01/01/2025</div>
<div class="t" style="left:215.7px;top:551.605px;line-height:12px;font-size:8.82px;color:#5a48d6;-webkit-text-stroke:0.2px #5a48d6;">Base Rent</div>
<div class="t" style="left:353.5px;top:551.605px;line-height:12px;font-size:8.8px;color:#2b2b33;-webkit-text-stroke:0.15px #2b2b33;">Base Rent</div>
<div class="t" style="left:541.5px;top:551.605px;line-height:12px;font-size:8.8px;color:#2b2b33;-webkit-text-stroke:0.15px #2b2b33;">-</div>
<div class="t" style="right:440.4000000000001px;top:551.605px;line-height:12px;font-size:8.7px;color:#2b2b33;-webkit-text-stroke:0.15px #2b2b33;">1,995.00</div>
<svg class="ico" style="left:1064.5px;top:551.005px" width="7.5" height="7.5" viewBox="0 0 7.5 7.5"><circle cx="3.75" cy="3.75" r="3.2" stroke="#3bb28a" stroke-width="0.8" fill="none"/><path d="M2.3 3.9 L3.4 4.9 L5.2 2.9" stroke="#3bb28a" stroke-width="0.8" fill="none"/></svg>
<div class="t" style="right:264px;top:551.605px;line-height:12px;font-size:8.7px;color:#2b2b33;-webkit-text-stroke:0.15px #2b2b33;">-</div>
<div class="t" style="right:96px;top:551.605px;line-height:12px;font-size:8.7px;color:#2b2b33;-webkit-text-stroke:0.15px #2b2b33;">(39.90)</div>
<div class="t" style="left:148px;top:579.535px;line-height:12px;font-size:9.85px;color:#2b2b33;-webkit-text-stroke:0.15px #2b2b33;">12/31/2024</div>
<div class="t" style="left:215.7px;top:579.535px;line-height:12px;font-size:8.82px;color:#5a48d6;-webkit-text-stroke:0.2px #5a48d6;">ACH Transfer from ABC_5</div>
<div class="t" style="left:353.5px;top:579.535px;line-height:12px;font-size:8.8px;color:#2b2b33;-webkit-text-stroke:0.15px #2b2b33;">-</div>
<div class="t" style="left:541.5px;top:579.535px;line-height:12px;font-size:8.8px;color:#2b2b33;-webkit-text-stroke:0.15px #2b2b33;">ACH</div>
<div class="t" style="left:720.4px;top:579.535px;line-height:12px;font-size:8.8px;color:#2b2b33;-webkit-text-stroke:0.15px #2b2b33;">Robert Frost</div>
<div class="t" style="right:432px;top:579.535px;line-height:12px;font-size:8.7px;color:#2b2b33;-webkit-text-stroke:0.15px #2b2b33;">-</div>
<div class="t" style="right:264px;top:579.535px;line-height:12px;font-size:8.7px;color:#2b2b33;-webkit-text-stroke:0.15px #2b2b33;">2,034.90</div>
<div class="t" style="right:96px;top:579.535px;line-height:12px;font-size:8.7px;color:#2b2b33;-webkit-text-stroke:0.15px #2b2b33;">(2,034.90)</div>
<div class="t" style="left:139.6px;top:612.0px;line-height:20px;font-size:10.04px;color:#4f3fd3;font-weight:bold;">Show All</div>
<div class="t" style="left:139px;top:651.2px;line-height:20px;font-size:14.6px;color:#1e1e2a;-webkit-text-stroke:0.2px #1e1e2a;">Scheduled Charges</div>
<div class="b" style="left:278.6px;top:650px;width:23.19999999999999px;height:23px;border:1.2px solid #877ddc;border-radius:50%;background:#fff"></div>
<svg class="ico" style="left:278.5px;top:650px" width="23" height="23" viewBox="0 0 23 23"><path d="M11.6 7.7 V15.3 M7.8 11.4 H15.4" stroke="#5546c8" stroke-width="1.2" stroke-linecap="round"/></svg>
<div class="b" style="left:139px;top:685px;width:1277.8px;height:26.600000000000023px;background:#f7f7f8"></div>
<div class="b" style="left:139px;top:711.1px;width:1277.8px;height:1.0px;background:#efeff2"></div>
<div class="b" style="left:139px;top:748.3000000000001px;width:1277.8px;height:1.0px;background:#efeff2"></div>
<div class="b" style="left:139px;top:785.5px;width:1277.8px;height:1.0px;background:#efeff2"></div>
<div class="b" style="left:139px;top:822.7px;width:1277.8px;height:1.0px;background:#efeff2"></div>
<div class="b" style="left:139px;top:859.9000000000001px;width:1277.8px;height:1.0px;background:#efeff2"></div>
<div class="b" style="left:139px;top:685px;width:1px;height:195px;background:#efeff2"></div>
<div class="b" style="left:1415.8px;top:685px;width:1.0px;height:195px;background:#efeff2"></div>
<div class="b" style="left:460.7px;top:685px;width:1.0px;height:195px;background:#f4f4f6"></div>
<div class="b" style="left:613.1px;top:685px;width:1.0px;height:195px;background:#f4f4f6"></div>
<div class="b" style="left:786.7px;top:685px;width:1.0px;height:195px;background:#f4f4f6"></div>
<div class="b" style="left:947.8px;top:685px;width:1.0px;height:195px;background:#f4f4f6"></div>
<div class="b" style="left:1110.0px;top:685px;width:1.0px;height:195px;background:#f4f4f6"></div>
<div class="b" style="left:1285.9px;top:685px;width:1.0px;height:195px;background:#f4f4f6"></div>
<div class="t" style="left:148.4px;top:691.4px;line-height:12px;font-size:8.85px;color:#2e2e3a;-webkit-text-stroke:0.1px #2e2e3a;">Title</div>
<div class="t" style="left:470.7px;top:691.4px;line-height:12px;font-size:8.85px;color:#2e2e3a;-webkit-text-stroke:0.1px #2e2e3a;">Frequency</div>
<div class="t" style="left:623.4px;top:691.4px;line-height:12px;font-size:8.85px;color:#2e2e3a;-webkit-text-stroke:0.1px #2e2e3a;">Next Charge</div>
<div class="t" style="left:795.7px;top:691.4px;line-height:12px;font-size:8.85px;color:#2e2e3a;-webkit-text-stroke:0.1px #2e2e3a;">Start Date</div>
<div class="t" style="left:957.6px;top:691.4px;line-height:12px;font-size:8.85px;color:#2e2e3a;-webkit-text-stroke:0.1px #2e2e3a;">End Date</div>
<div class="t" style="left:1119.2px;top:691.4px;line-height:12px;font-size:8.85px;color:#2e2e3a;-webkit-text-stroke:0.1px #2e2e3a;">Lease Status</div>
<div class="t" style="right:96px;top:691.4px;line-height:12px;font-size:8.85px;color:#2e2e3a;-webkit-text-stroke:0.1px #2e2e3a;">Amount</div>
<div class="t" style="left:148.6px;top:724.2px;line-height:12px;font-size:9.81px;color:#4f3fd3;font-weight:bold;">440013 Processing Fee</div>
<div class="t" style="left:470.5px;top:724.2px;line-height:12px;font-size:9.1px;color:#2b2b33;-webkit-text-stroke:0.15px #2b2b33;">Monthly</div>
<div class="t" style="left:623.4px;top:724.2px;line-height:12px;font-size:8.9px;color:#2b2b33;-webkit-text-stroke:0.15px #2b2b33;">Expired</div>
<div class="t" style="left:795.7px;top:724.2px;line-height:12px;font-size:8.5px;color:#2b2b33;-webkit-text-stroke:0.15px #2b2b33;">01/01/2024</div>
<div class="t" style="left:957.6px;top:724.2px;line-height:12px;font-size:8.5px;color:#2b2b33;-webkit-text-stroke:0.15px #2b2b33;">03/21/2024</div>
<div class="b" style="left:1119.5px;top:721.9000000000001px;width:35.90000000000009px;height:16.59999999999991px;background:#ddf4ea;border-radius:8px"></div>
<div class="t" style="left:1119.5px;top:724.6px;line-height:12px;font-size:8.6px;color:#3a8d68;width:35.9px;text-align:center;-webkit-text-stroke:0.25px #3a8d68;">Active</div>
<div class="t" style="right:96px;top:724.2px;line-height:12px;font-size:8.7px;color:#2b2b33;-webkit-text-stroke:0.15px #2b2b33;">$ 33.91</div>
<div class="t" style="left:148.6px;top:761.4000000000001px;line-height:12px;font-size:9.81px;color:#4f3fd3;font-weight:bold;">410003 Base Rent</div>
<div class="t" style="left:470.5px;top:761.4000000000001px;line-height:12px;font-size:9.1px;color:#2b2b33;-webkit-text-stroke:0.15px #2b2b33;">Monthly</div>
<div class="t" style="left:623.4px;top:761.4000000000001px;line-height:12px;font-size:8.9px;color:#2b2b33;-webkit-text-stroke:0.15px #2b2b33;">Expired</div>
<div class="t" style="left:795.7px;top:761.4000000000001px;line-height:12px;font-size:8.5px;color:#2b2b33;-webkit-text-stroke:0.15px #2b2b33;">01/01/2024</div>
<div class="t" style="left:957.6px;top:761.4000000000001px;line-height:12px;font-size:8.5px;color:#2b2b33;-webkit-text-stroke:0.15px #2b2b33;">12/31/2024</div>
<div class="b" style="left:1119.5px;top:759.1000000000001px;width:35.90000000000009px;height:16.59999999999991px;background:#ddf4ea;border-radius:8px"></div>
<div class="t" style="left:1119.5px;top:761.8000000000001px;line-height:12px;font-size:8.6px;color:#3a8d68;width:35.9px;text-align:center;-webkit-text-stroke:0.25px #3a8d68;">Active</div>
<div class="t" style="right:96px;top:761.4000000000001px;line-height:12px;font-size:8.7px;color:#2b2b33;-webkit-text-stroke:0.15px #2b2b33;">1,995.00</div>
<div class="t" style="left:148.6px;top:798.6px;line-height:12px;font-size:9.81px;color:#4f3fd3;font-weight:bold;">440013 Processing Fee</div>
<div class="t" style="left:470.5px;top:798.6px;line-height:12px;font-size:9.1px;color:#2b2b33;-webkit-text-stroke:0.15px #2b2b33;">Monthly</div>
<div class="t" style="left:623.4px;top:798.6px;line-height:12px;font-size:8.9px;color:#2b2b33;-webkit-text-stroke:0.15px #2b2b33;">Expired</div>
<div class="t" style="left:795.7px;top:798.6px;line-height:12px;font-size:8.5px;color:#2b2b33;-webkit-text-stroke:0.15px #2b2b33;">04/01/2024</div>
<div class="t" style="left:957.6px;top:798.6px;line-height:12px;font-size:8.5px;color:#2b2b33;-webkit-text-stroke:0.15px #2b2b33;">02/01/2025</div>
<div class="b" style="left:1119.5px;top:796.3000000000001px;width:35.90000000000009px;height:16.59999999999991px;background:#ddf4ea;border-radius:8px"></div>
<div class="t" style="left:1119.5px;top:799.0px;line-height:12px;font-size:8.6px;color:#3a8d68;width:35.9px;text-align:center;-webkit-text-stroke:0.25px #3a8d68;">Active</div>
<div class="t" style="right:96px;top:798.6px;line-height:12px;font-size:8.7px;color:#2b2b33;-webkit-text-stroke:0.15px #2b2b33;">19.95</div>
<div class="t" style="left:148.6px;top:835.8000000000001px;line-height:12px;font-size:9.81px;color:#4f3fd3;font-weight:bold;">440013 Processing Fee</div>
<div class="t" style="left:470.5px;top:835.8000000000001px;line-height:12px;font-size:9.1px;color:#2b2b33;-webkit-text-stroke:0.15px #2b2b33;">Monthly</div>
<div class="t" style="left:623.4px;top:835.8000000000001px;line-height:12px;font-size:8.9px;color:#2b2b33;-webkit-text-stroke:0.15px #2b2b33;">Expired</div>
<div class="t" style="left:795.7px;top:835.8000000000001px;line-height:12px;font-size:8.5px;color:#2b2b33;-webkit-text-stroke:0.15px #2b2b33;">01/01/2025</div>
<div class="t" style="left:957.6px;top:835.8000000000001px;line-height:12px;font-size:8.5px;color:#2b2b33;-webkit-text-stroke:0.15px #2b2b33;">03/21/2024</div>
<div class="b" style="left:1119.5px;top:833.5000000000001px;width:35.90000000000009px;height:16.59999999999991px;background:#ddf4ea;border-radius:8px"></div>
<div class="t" style="left:1119.5px;top:836.2px;line-height:12px;font-size:8.6px;color:#3a8d68;width:35.9px;text-align:center;-webkit-text-stroke:0.25px #3a8d68;">Active</div>
<div class="t" style="right:96px;top:835.8000000000001px;line-height:12px;font-size:8.7px;color:#2b2b33;-webkit-text-stroke:0.15px #2b2b33;">33.91</div>
</body></html>
